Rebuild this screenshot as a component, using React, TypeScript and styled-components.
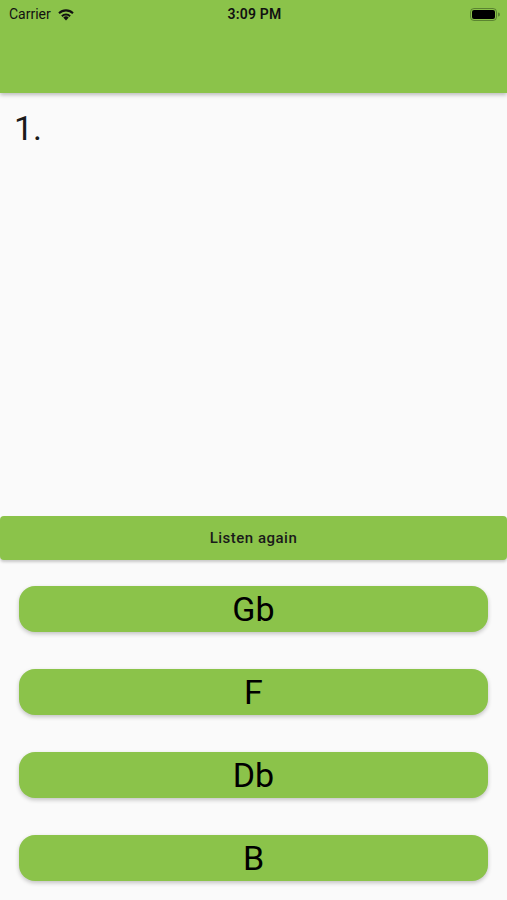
import React from 'react';
import styled, { createGlobalStyle } from 'styled-components';

const green = '#8bc34a';

const Global = createGlobalStyle`
  html, body { margin: 0; padding: 0; background: #fafafa; }
  body { font-family: Roboto, "Liberation Sans", sans-serif; color: #000; }
`;

const Page = styled.div`
  display: flex;
  flex-direction: column;
  width: 507px;
  height: 900px;
  background: #fafafa;
  overflow: hidden;
`;

const Header = styled.header`
  height: 93px;
  flex-shrink: 0;
  background: ${green};
  box-shadow: 0 2px 4px rgba(0, 0, 0, 0.25);
  position: relative;
  z-index: 1;
`;

const StatusBar = styled.div`
  display: grid;
  grid-template-columns: 1fr auto 1fr;
  align-items: center;
  height: 28px;
  padding: 0 7px 0 9px;
  font-size: 14px;
  color: #111;
`;

const Carrier = styled.div`
  display: flex;
  align-items: center;
  gap: 6px;
`;

const Clock = styled.div`
  font-weight: 600;
  letter-spacing: 0.2px;
`;

const Battery = styled.div`
  justify-self: end;
  display: flex;
  align-items: center;
`;

const Main = styled.main`
  flex: 1;
  padding: 15px 14px;
  font-size: 34px;
  line-height: 40px;
  color: #1a1a1a;
`;

const ListenBar = styled.button`
  height: 44px;
  flex-shrink: 0;
  border: none;
  border-radius: 4px;
  background: ${green};
  box-shadow: 0 2px 3px rgba(0, 0, 0, 0.2);
  font-family: Roboto, "Liberation Sans", sans-serif;
  font-size: 15px;
  font-weight: 500;
  letter-spacing: 0.5px;
  color: #1a1a1a;
  padding: 0;
`;

const Options = styled.div`
  display: flex;
  flex-direction: column;
  gap: 37px;
  padding: 26px 19px 19px;
`;

const Answer = styled.button`
  height: 46px;
  border: none;
  border-radius: 16px;
  background: ${green};
  box-shadow: 0 2px 4px rgba(0, 0, 0, 0.22);
  font-family: Roboto, "Liberation Sans", sans-serif;
  font-size: 34px;
  color: #000;
  padding: 0;
`;

const answers = ['Gb', 'F', 'Db', 'B'];

export default function App() {
  return (
    <Page>
      <Global />
      <Header>
        <StatusBar>
          <Carrier>
            Carrier
            <svg width="18" height="13" viewBox="0 0 18 13">
              <path d="M9 12.5 L6.3 9.6 A4 4 0 0 1 11.7 9.6 Z" fill="#111" />
              <path d="M4.2 7.5 A6.8 6.8 0 0 1 13.8 7.5 L12.4 9 A4.8 4.8 0 0 0 5.6 9 Z" fill="#111" />
              <path d="M1.3 4.6 A10.8 10.8 0 0 1 16.7 4.6 L15.3 6.1 A8.8 8.8 0 0 0 2.7 6.1 Z" fill="#111" />
            </svg>
          </Carrier>
          <Clock>3:09 PM</Clock>
          <Battery>
            <svg width="30" height="13" viewBox="0 0 30 13">
              <rect x="0.5" y="0.5" width="26" height="12" rx="3.5" fill="none" stroke="#3c5a22" strokeOpacity="0.6" />
              <rect x="2" y="2" width="23" height="9" rx="2" fill="#000" />
              <path d="M28 4.5 a1.5 1.5 0 0 1 0 4 Z" fill="#3c5a22" fillOpacity="0.6" />
            </svg>
          </Battery>
        </StatusBar>
      </Header>
      <Main>1.</Main>
      <ListenBar>Listen again</ListenBar>
      <Options>
        {answers.map((a) => (
          <Answer key={a}>{a}</Answer>
        ))}
      </Options>
    </Page>
  );
}
